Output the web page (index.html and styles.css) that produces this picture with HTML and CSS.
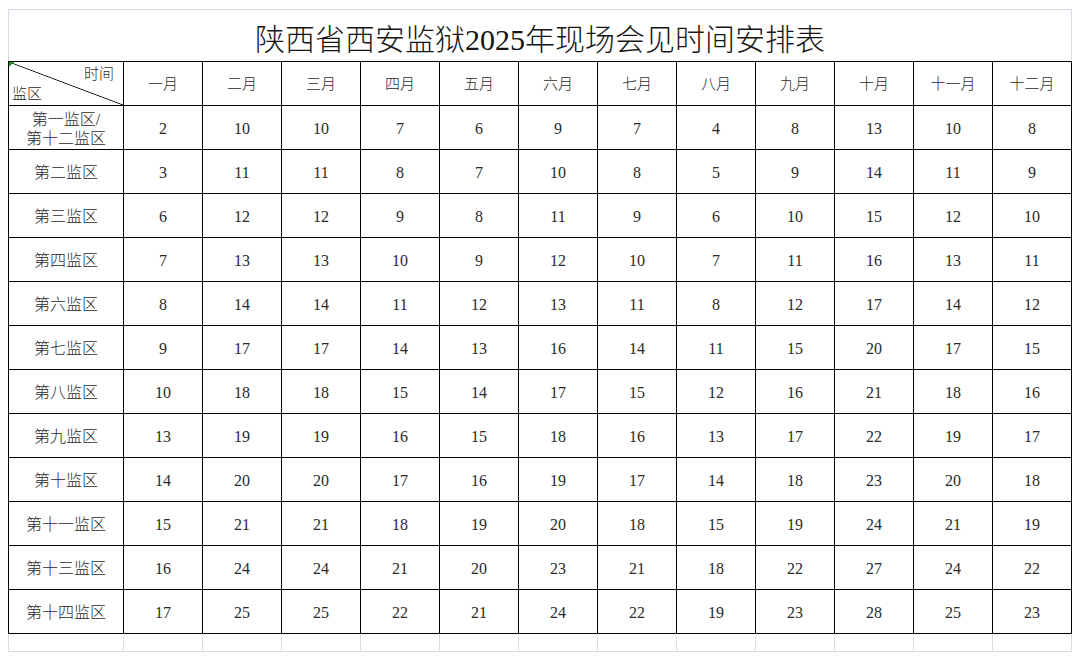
FILE: index.html
```html
<!DOCTYPE html>
<html lang="zh-CN">
<head>
<meta charset="utf-8">
<title>陕西省西安监狱2025年现场会见时间安排表</title>
<link rel="stylesheet" href="styles.css">
</head>
<body>
<div class="sheet">
  <div class="title">陕西省西安监狱2025年现场会见时间安排表</div>
  <div class="grid">
    <div class="cell diag"><span class="d-top">时间</span><span class="d-bot">监区</span></div>
    <div class="cell">一月</div><div class="cell">二月</div><div class="cell">三月</div><div class="cell">四月</div>
    <div class="cell">五月</div><div class="cell">六月</div><div class="cell">七月</div><div class="cell">八月</div>
    <div class="cell">九月</div><div class="cell">十月</div><div class="cell">十一月</div><div class="cell">十二月</div>

    <div class="cell name two">第一监区/<br>第十二监区</div>
    <div class="cell num">2</div><div class="cell num">10</div><div class="cell num">10</div><div class="cell num">7</div><div class="cell num">6</div><div class="cell num">9</div><div class="cell num">7</div><div class="cell num">4</div><div class="cell num">8</div><div class="cell num">13</div><div class="cell num">10</div><div class="cell num">8</div>

    <div class="cell name">第二监区</div>
    <div class="cell num">3</div><div class="cell num">11</div><div class="cell num">11</div><div class="cell num">8</div><div class="cell num">7</div><div class="cell num">10</div><div class="cell num">8</div><div class="cell num">5</div><div class="cell num">9</div><div class="cell num">14</div><div class="cell num">11</div><div class="cell num">9</div>

    <div class="cell name">第三监区</div>
    <div class="cell num">6</div><div class="cell num">12</div><div class="cell num">12</div><div class="cell num">9</div><div class="cell num">8</div><div class="cell num">11</div><div class="cell num">9</div><div class="cell num">6</div><div class="cell num">10</div><div class="cell num">15</div><div class="cell num">12</div><div class="cell num">10</div>

    <div class="cell name">第四监区</div>
    <div class="cell num">7</div><div class="cell num">13</div><div class="cell num">13</div><div class="cell num">10</div><div class="cell num">9</div><div class="cell num">12</div><div class="cell num">10</div><div class="cell num">7</div><div class="cell num">11</div><div class="cell num">16</div><div class="cell num">13</div><div class="cell num">11</div>

    <div class="cell name">第六监区</div>
    <div class="cell num">8</div><div class="cell num">14</div><div class="cell num">14</div><div class="cell num">11</div><div class="cell num">12</div><div class="cell num">13</div><div class="cell num">11</div><div class="cell num">8</div><div class="cell num">12</div><div class="cell num">17</div><div class="cell num">14</div><div class="cell num">12</div>

    <div class="cell name">第七监区</div>
    <div class="cell num">9</div><div class="cell num">17</div><div class="cell num">17</div><div class="cell num">14</div><div class="cell num">13</div><div class="cell num">16</div><div class="cell num">14</div><div class="cell num">11</div><div class="cell num">15</div><div class="cell num">20</div><div class="cell num">17</div><div class="cell num">15</div>

    <div class="cell name">第八监区</div>
    <div class="cell num">10</div><div class="cell num">18</div><div class="cell num">18</div><div class="cell num">15</div><div class="cell num">14</div><div class="cell num">17</div><div class="cell num">15</div><div class="cell num">12</div><div class="cell num">16</div><div class="cell num">21</div><div class="cell num">18</div><div class="cell num">16</div>

    <div class="cell name">第九监区</div>
    <div class="cell num">13</div><div class="cell num">19</div><div class="cell num">19</div><div class="cell num">16</div><div class="cell num">15</div><div class="cell num">18</div><div class="cell num">16</div><div class="cell num">13</div><div class="cell num">17</div><div class="cell num">22</div><div class="cell num">19</div><div class="cell num">17</div>

    <div class="cell name">第十监区</div>
    <div class="cell num">14</div><div class="cell num">20</div><div class="cell num">20</div><div class="cell num">17</div><div class="cell num">16</div><div class="cell num">19</div><div class="cell num">17</div><div class="cell num">14</div><div class="cell num">18</div><div class="cell num">23</div><div class="cell num">20</div><div class="cell num">18</div>

    <div class="cell name">第十一监区</div>
    <div class="cell num">15</div><div class="cell num">21</div><div class="cell num">21</div><div class="cell num">18</div><div class="cell num">19</div><div class="cell num">20</div><div class="cell num">18</div><div class="cell num">15</div><div class="cell num">19</div><div class="cell num">24</div><div class="cell num">21</div><div class="cell num">19</div>

    <div class="cell name">第十三监区</div>
    <div class="cell num">16</div><div class="cell num">24</div><div class="cell num">24</div><div class="cell num">21</div><div class="cell num">20</div><div class="cell num">23</div><div class="cell num">21</div><div class="cell num">18</div><div class="cell num">22</div><div class="cell num">27</div><div class="cell num">24</div><div class="cell num">22</div>

    <div class="cell name">第十四监区</div>
    <div class="cell num">17</div><div class="cell num">25</div><div class="cell num">25</div><div class="cell num">22</div><div class="cell num">21</div><div class="cell num">24</div><div class="cell num">22</div><div class="cell num">19</div><div class="cell num">23</div><div class="cell num">28</div><div class="cell num">25</div><div class="cell num">23</div>
  </div>
  <div class="foot">
    <div></div><div></div><div></div><div></div><div></div><div></div><div></div><div></div><div></div><div></div><div></div><div></div><div></div>
  </div>
</div>
</body>
</html>
```

FILE: styles.css
```css
html, body {
  margin: 0;
  padding: 0;
  background: #fff;
}
body {
  font-family: "Liberation Serif", "Noto Sans CJK SC", serif;
  color: #2a2a2a;
}
.sheet {
  padding: 9px 0 0 8px;
  width: 1064px;
}
.title {
  box-sizing: border-box;
  height: 52px;
  border: 1px solid #d6dbe7;
  border-bottom: none;
  display: flex;
  align-items: center;
  justify-content: center;
  font-size: 30px;
  font-weight: 300;
  color: #151515;
  padding-top: 3px;
}
.grid {
  display: grid;
  grid-template-columns: 114px repeat(12, 78px);
  grid-auto-rows: 43px;
  gap: 1px;
  background: #000;
  border: 1px solid #000;
}
.cell {
  background: #fff;
  display: flex;
  align-items: center;
  justify-content: center;
  text-align: center;
  font-size: 15px;
  font-weight: 300;
  line-height: 19px;
  padding-top: 1px;
}
.name {
  font-size: 16px;
}
.num {
  font-size: 16px;
  font-weight: 400;
}
.two {
  padding-top: 3px;
}
.diag {
  position: relative;
  flex-direction: column;
  align-items: stretch;
  justify-content: space-between;
  padding: 3px 9px 1px 3px;
  background: linear-gradient(to top right, #fff calc(50% - 0.8px), #000 50%, #fff calc(50% + 0.8px));
}
.diag::before {
  content: "";
  position: absolute;
  left: 0;
  top: 0;
  border-top: 5px solid #1a9a1a;
  border-right: 5px solid transparent;
}
.d-top {
  text-align: right;
}
.d-bot {
  text-align: left;
}
.foot {
  display: grid;
  grid-template-columns: 114px repeat(12, 78px);
  grid-auto-rows: 17px;
  gap: 1px;
  background: #d6dbe7;
  border: 1px solid #d6dbe7;
  border-top: none;
}
.foot div {
  background: #fff;
}
```
